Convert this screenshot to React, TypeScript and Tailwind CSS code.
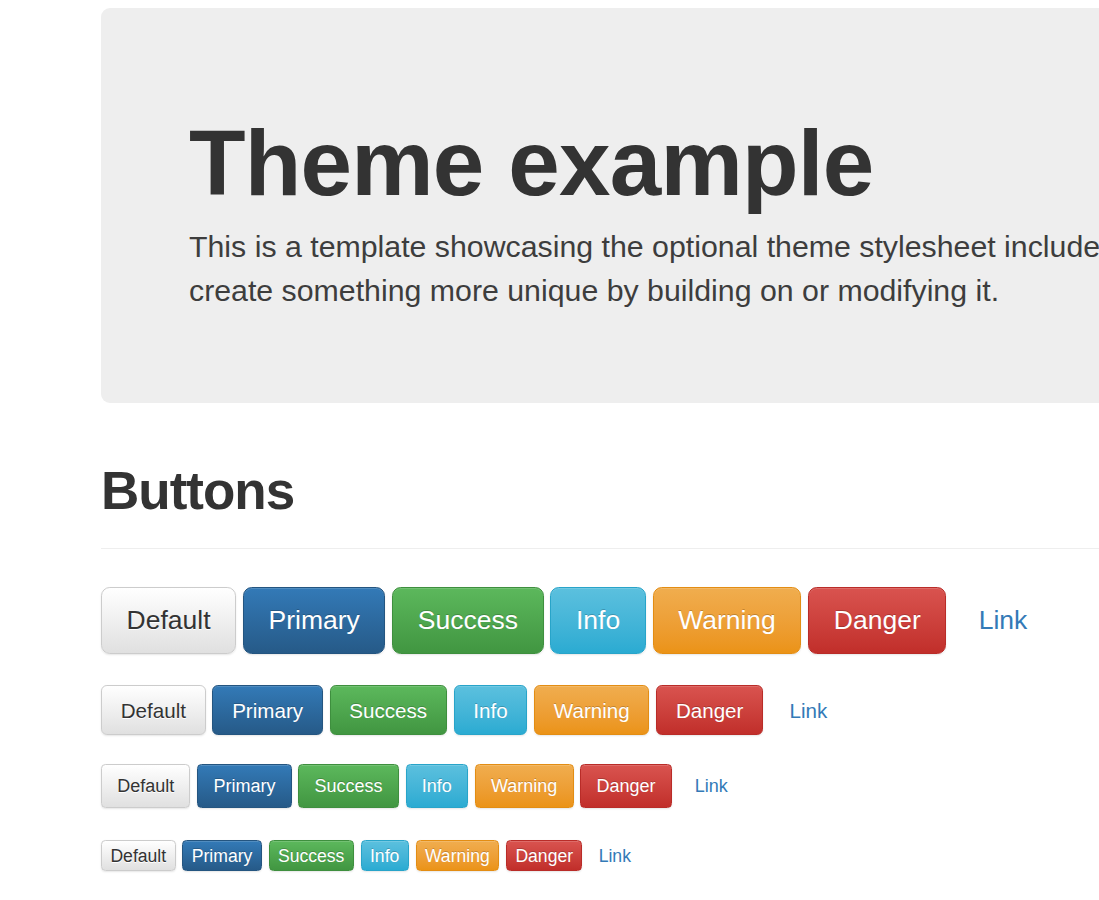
import React from 'react';

type Variant = 'default' | 'primary' | 'success' | 'info' | 'warning' | 'danger' | 'link';
type Size = 'lg' | 'md' | 'sm' | 'xs';

const variantClass: Record<Variant, string> = {
  default:
    'bg-linear-to-b from-[#ffffff] to-[#e0e0e0] border-[#cccccc] text-[#333333] [text-shadow:0_1px_0_#fff] shadow-[inset_0_1px_0_rgba(255,255,255,0.15),0_1px_2px_rgba(0,0,0,0.1)]',
  primary:
    'bg-linear-to-b from-[#337ab7] to-[#265a88] border-[#245580] text-white [text-shadow:0_-1px_0_rgba(0,0,0,0.2)] shadow-[inset_0_1px_0_rgba(255,255,255,0.15),0_1px_2px_rgba(0,0,0,0.1)]',
  success:
    'bg-linear-to-b from-[#5cb85c] to-[#419641] border-[#3e8f3e] text-white [text-shadow:0_-1px_0_rgba(0,0,0,0.2)] shadow-[inset_0_1px_0_rgba(255,255,255,0.15),0_1px_2px_rgba(0,0,0,0.1)]',
  info:
    'bg-linear-to-b from-[#5bc0de] to-[#2aabd2] border-[#28a4c9] text-white [text-shadow:0_-1px_0_rgba(0,0,0,0.2)] shadow-[inset_0_1px_0_rgba(255,255,255,0.15),0_1px_2px_rgba(0,0,0,0.1)]',
  warning:
    'bg-linear-to-b from-[#f0ad4e] to-[#eb9316] border-[#e38d13] text-white [text-shadow:0_-1px_0_rgba(0,0,0,0.2)] shadow-[inset_0_1px_0_rgba(255,255,255,0.15),0_1px_2px_rgba(0,0,0,0.1)]',
  danger:
    'bg-linear-to-b from-[#d9534f] to-[#c12e2a] border-[#b92c28] text-white [text-shadow:0_-1px_0_rgba(0,0,0,0.2)] shadow-[inset_0_1px_0_rgba(255,255,255,0.15),0_1px_2px_rgba(0,0,0,0.1)]',
  link: 'bg-transparent border-transparent text-[#337ab7]',
};

// sizes scaled ~1.47x from bootstrap's btn-lg / btn / btn-sm / btn-xs
const sizeClass: Record<Size, string> = {
  lg: 'h-[67px] text-[26.5px] leading-[35px] px-[24.6px] rounded-[8.8px]',
  md: 'h-[50px] text-[20.6px] leading-[29px] px-[18.7px] rounded-[5.9px]',
  sm: 'h-[44px] text-[18px] leading-[26px] px-[15.2px] rounded-[4.4px]',
  xs: 'h-[31px] text-[17.6px] leading-[26px] px-[8.4px] rounded-[4.4px]',
};

const rows: { size: Size; mb: string }[] = [
  { size: 'lg', mb: 'mb-[31px]' },
  { size: 'md', mb: 'mb-[29px]' },
  { size: 'sm', mb: 'mb-[32px]' },
  { size: 'xs', mb: 'mb-0' },
];

const labels: { label: string; variant: Variant }[] = [
  { label: 'Default', variant: 'default' },
  { label: 'Primary', variant: 'primary' },
  { label: 'Success', variant: 'success' },
  { label: 'Info', variant: 'info' },
  { label: 'Warning', variant: 'warning' },
  { label: 'Danger', variant: 'danger' },
  { label: 'Link', variant: 'link' },
];

function Btn({ label, variant, size }: { label: string; variant: Variant; size: Size }) {
  return (
    <button
      type="button"
      className={`flex items-center border whitespace-nowrap font-normal ${sizeClass[size]} ${variantClass[variant]}`}
    >
      {label}
    </button>
  );
}

export default function App() {
  return (
    <div className="w-[1099px] h-[900px] overflow-hidden bg-white text-[#333333] font-['Liberation_Sans',Arial,sans-serif]">
      <div className="pl-[101px] pt-[8px]">
        <div className="w-[1800px] bg-[#eeeeee] rounded-[9px] pt-[104px] pb-[90px] px-[88px]">
          <h1 className="text-[92.6px] leading-[102px] font-bold tracking-[-0.8px] mb-[11px]">Theme example</h1>
          <p className="text-[30.3px] leading-[44px] text-[#3d3d3d] whitespace-nowrap">
            This is a template showcasing the optional theme stylesheet included in Bootstrap. Use it as a starting point to
            <br />
            create something more unique by building on or modifying it.
          </p>
        </div>

        <div className="mt-[59px] pb-[13px] border-b border-[#eeeeee] mb-[38px]">
          <h1 className="text-[53px] leading-[58px] font-bold tracking-[-1px] mb-[15px]">Buttons</h1>
        </div>

        {rows.map((row) => (
          <div key={row.size} className={`flex items-center gap-[6.8px] ${row.mb}`}>
            {labels.map((b) => (
              <Btn key={b.label} label={b.label} variant={b.variant} size={row.size} />
            ))}
          </div>
        ))}
      </div>
    </div>
  );
}
